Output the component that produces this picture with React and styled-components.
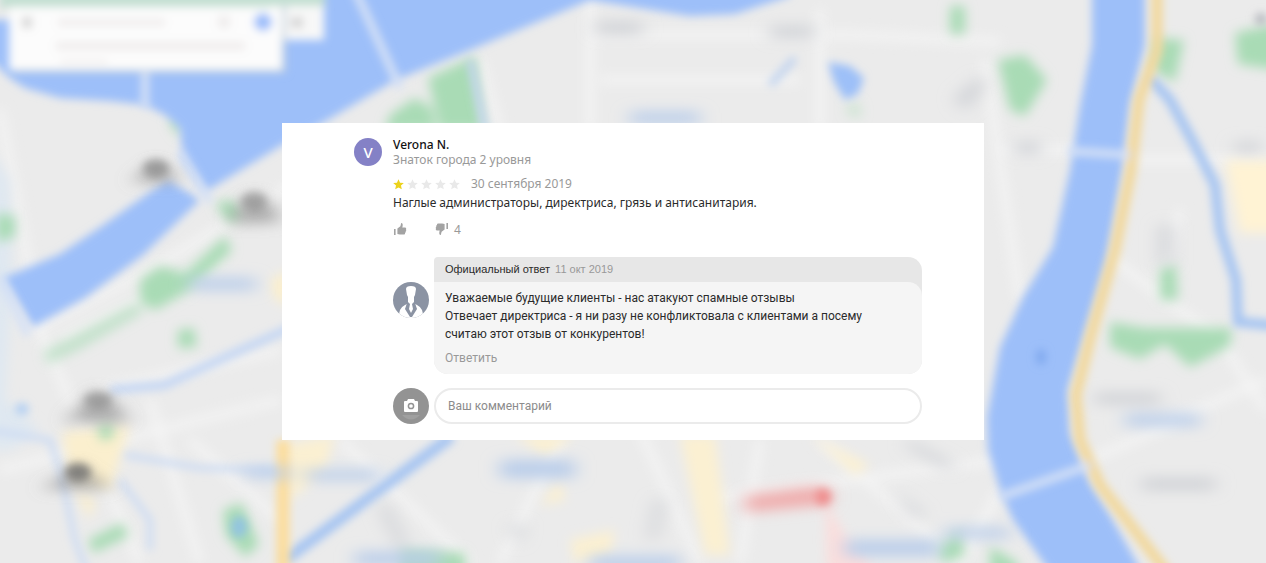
import React, { useState } from "react";
import styled, { createGlobalStyle } from "styled-components";

const review = {
  author: "Verona N.",
  level: "Знаток города 2 уровня",
  rating: 1,
  date: "30 сентября 2019",
  text: "Наглые администраторы, директриса, грязь и антисанитария.",
  likes: 0,
  dislikes: 4,
};

const reply = {
  title: "Официальный ответ",
  date: "11 окт 2019",
  lines: [
    "Уважаемые будущие клиенты - нас атакуют спамные отзывы",
    "Отвечает директриса - я ни разу не конфликтовала с клиентами а посему считаю этот отзыв от конкурентов!",
  ],
};

const App = () => {
  const [comment, setComment] = useState("");

  return (
    <Page>
      <GlobalStyle />
      <CityMap />
      <Card>
        <UserAvatar>V</UserAvatar>
        <Content>
          <Author>{review.author}</Author>
          <Level>{review.level}</Level>
          <RatingRow>
            <Rating value={review.rating} />
            <ReviewDate>{review.date}</ReviewDate>
          </RatingRow>
          <ReviewText>{review.text}</ReviewText>
          <Votes>
            <VoteButton type="button" aria-label="Нравится">
              <ThumbUp />
              {review.likes > 0 && review.likes}
            </VoteButton>
            <VoteButton type="button" aria-label="Не нравится">
              <ThumbDown />
              {review.dislikes > 0 && review.dislikes}
            </VoteButton>
          </Votes>
          <Thread>
            <OwnerAvatar />
            <Answer>
              <AnswerHeader>
                {reply.title}
                <AnswerDate>{reply.date}</AnswerDate>
              </AnswerHeader>
              <AnswerBody>
                {reply.lines.map((line) => (
                  <AnswerText key={line}>{line}</AnswerText>
                ))}
                <ReplyButton type="button">Ответить</ReplyButton>
              </AnswerBody>
            </Answer>
          </Thread>
          <CommentForm onSubmit={(e) => e.preventDefault()}>
            <CameraAvatar />
            <CommentInput
              type="text"
              aria-label="Ваш комментарий"
              placeholder="Ваш комментарий"
              value={comment}
              onChange={(e) => setComment(e.target.value)}
            />
          </CommentForm>
        </Content>
      </Card>
    </Page>
  );
};

// Sub-components
const Rating = ({ value }) => (
  <Stars role="img" aria-label={`Оценка ${value} из 5`}>
    {[1, 2, 3, 4, 5].map((n) => (
      <svg key={n} width="11" height="11" viewBox="0 0 12 12">
        <path
          d="M6 0.3 L7.7 4 L11.8 4.4 L8.7 7.2 L9.6 11.3 L6 9.2 L2.4 11.3 L3.3 7.2 L0.2 4.4 L4.3 4 Z"
          fill={n <= value ? "#ecd21c" : "#e9e9e9"}
        />
      </svg>
    ))}
  </Stars>
);

const ThumbUp = () => (
  <svg width="14" height="14" viewBox="0 0 14 14" fill="#a3a3a3">
    <path d="M1 7 H2.6 V13 H1 Z" />
    <path d="M4.4 6.6 L7.4 4.2 L8.2 1 C9.6 0.9 10 2.2 9.6 4.2 L9.3 5.4 H12 C13.3 5.4 13.5 6.7 12.9 7.2 C13.6 7.9 13.3 8.8 12.7 9.1 C13 9.9 12.7 10.7 12 11 C12.2 12 11.6 12.6 10.6 12.6 H6.8 L4.4 12 Z" />
  </svg>
);

const ThumbDown = () => (
  <svg width="14" height="14" viewBox="0 0 14 14" fill="#a3a3a3">
    <path d="M11.4 1 H13 V7 H11.4 Z" />
    <path d="M9.6 7.4 L6.6 9.8 L5.8 13 C4.4 13.1 4 11.8 4.4 9.8 L4.7 8.6 H2 C0.7 8.6 0.5 7.3 1.1 6.8 C0.4 6.1 0.7 5.2 1.3 4.9 C1 4.1 1.3 3.3 2 3 C1.8 2 2.4 1.4 3.4 1.4 H7.2 L9.6 2 Z" />
  </svg>
);

const OwnerAvatar = () => (
  <OwnerPicture viewBox="0 0 36 36" aria-hidden="true">
    <clipPath id="owner-clip">
      <circle cx="18" cy="18" r="18" />
    </clipPath>
    <g clipPath="url(#owner-clip)">
      <rect width="36" height="36" fill="#8b93a3" />
      {/* shoulders */}
      <path d="M5 36 L7 28 Q8 25 12 23 L14 22 L18 34 L22 22 L24 23 Q28 25 29 28 L31 36 Z" fill="#fff" />
      {/* jacket */}
      <path d="M14 21 H22 L24 27 L19 35 H17 L12 27 Z" fill="#8b93a3" />
      {/* head and tie */}
      <path
        d="M13 7 Q13 4 18 4 Q23 4 23 7 L22 13 L21 15 V20 L19 22 L20 27 L18 31 L16 27 L17 22 L15 20 V15 L14 13 Z"
        fill="#fff"
      />
    </g>
  </OwnerPicture>
);

const CameraAvatar = () => (
  <CameraPicture viewBox="0 0 36 36" aria-hidden="true">
    <circle cx="18" cy="18" r="18" fill="#939393" />
    <path d="M9 27 H27 Q18 36 9 27 Z" fill="#a0a0a0" />
    <path
      d="M12 13 H14 L15 11 H21 L22 13 H24 Q25 13 25 14 V23 Q25 24 24 24 H12 Q11 24 11 23 V14 Q11 13 12 13 Z"
      fill="#fff"
    />
    <circle cx="18" cy="18" r="2.6" fill="none" stroke="#939393" strokeWidth="1.5" />
  </CameraPicture>
);

const CityMap = () => (
  <MapLayer viewBox="0 0 1266 563" preserveAspectRatio="xMidYMid slice" aria-hidden="true">
    <defs>
      <filter id="soft" filterUnits="userSpaceOnUse" x="-60" y="-60" width="1386" height="683">
        <feGaussianBlur stdDeviation="4" />
      </filter>
      <filter id="hazy" filterUnits="userSpaceOnUse" x="-60" y="-60" width="1386" height="683">
        <feGaussianBlur stdDeviation="6" />
      </filter>
      <filter id="smudge" filterUnits="userSpaceOnUse" x="-60" y="-60" width="1386" height="683">
        <feGaussianBlur stdDeviation="9 7" />
      </filter>
    </defs>
    <rect x="-60" y="-60" width="1386" height="683" fill="#ebebeb" />

    {/* minor streets */}
    <g filter="url(#hazy)" fill="none" stroke="#f5f5f5" strokeWidth="7">
      <path d="M590 -10 V130 M480 60 L500 130 M590 35 H850 L1000 42 M820 10 V130 M600 80 H800" />
      <path d="M985 60 L1020 300 M1000 150 H1080 M1130 160 H1266 M1150 430 L1266 380 M1090 460 L1180 420 M1180 210 L1160 300 M1100 250 L1220 340 L1266 410" />
      <path d="M0 110 L40 330 L70 400 L140 563 M33 330 L150 270 L300 180 M60 340 L220 260 M100 390 L280 350 M0 470 L280 400 M150 400 L200 563 M190 440 L280 520" />
      <path d="M340 440 L470 563 M560 440 L500 563 M640 430 L700 563 M760 440 L740 563 M820 440 L960 563 M700 500 L1000 460 M1000 490 L960 563" />
    </g>

    {/* tinted areas */}
    <g filter="url(#hazy)">
      <path d="M1225 160 H1290 V233 H1240 Z" fill="#fff3d4" />
      <path d="M62 432 L130 425 L110 490 L70 480 Z M75 490 L95 500 L90 520 Z M270 280 L290 270 V305 L275 300 Z" fill="#fbefce" />
      <path d="M285 445 L335 435 L325 470 L290 500 Z M515 435 H575 L545 456 Z M680 435 H715 L730 555 H705 Z M570 540 L615 530 L610 555 L575 563 Z M540 505 L560 480 L565 500 Z M810 435 L870 465 L855 475 Z" fill="#fbf0d2" />
      <path d="M-10 150 L10 180 L12 280 L5 400 L40 430 L10 450 L-10 450 Z" fill="#dfe8f1" />
      <path d="M825 500 L845 535 L870 563 V590 H828 Z" fill="#fadedd" />
    </g>

    {/* parks */}
    <g filter="url(#hazy)" fill="#a9dbb5">
      <path d="M428 78 L475 56 L484 130 H440 Z M390 115 L415 98 L432 108 L436 130 H385 Z" />
      <path d="M998 60 L1025 55 L1047 80 L1025 116 L1010 110 Z M950 6 H965 V34 H950 Z M1155 38 L1184 40 L1175 82 L1152 70 Z M1235 33 L1280 23 V70 L1238 64 Z" />
      <path d="M1110 322 L1145 328 H1232 L1230 346 L1190 367 L1165 344 L1140 359 L1110 347 Z M1160 268 L1176 264 L1178 300 L1160 300 Z" />
      <path d="M168 120 L182 118 L180 138 Z M140 280 L160 266 L185 273 L225 236 L232 250 L190 290 L155 310 L140 302 Z M215 203 L232 200 L242 215 L230 224 Z M-4 213 L15 216 L15 237 L-4 242 Z" />
      <path d="M178 330 L194 328 L197 347 L178 348 Z M88 540 L122 523 L129 536 L93 553 Z M223 510 L242 503 L259 545 L245 557 L226 535 Z M98 425 L113 424 L113 438 L100 440 Z" />
      <path d="M400 550 L465 553 V590 H400 Z M935 550 L960 530 L965 555 L945 563 Z M990 546 L1018 563 V580 H990 Z" />
      <path d="M845 105 L860 102 L862 118 L848 116 Z" opacity="0.4" />
      <path d="M43 352 L70 338 L135 303 L144 312 L80 349 L48 364 Z" opacity="0.6" />
    </g>

    {/* rivers */}
    <g filter="url(#soft)">
      <path
        d="M-20 50 L10 78 L25 88 L60 98 L110 101 L145 105 L165 115 L180 128 L183 160 L205 192 L282 145 L326 121 L370 95 L396 80 L470 50 L530 25 L590 0 L640 8 L690 16 L735 14 L790 -4 L800 -50 H300 V20 H-20 Z"
        fill="#9dbff9"
      />
      <path d="M3 278 L60 254 L102 226 L150 192 L168 180 L200 200 L143 255 L85 298 L33 327 Z" fill="#9dbff9" />
      <path
        d="M1092 -50 V45 L1080 105 L1070 170 L1053 247 L1023 297 L1000 347 L987 417 L988 450 L1000 490 L1013 520 L1070 600 H1155 L1137 563 L1110 515 L1090 483 L1070 433 L1068 390 L1087 327 L1107 260 L1123 167 L1130 105 L1145 45 V-50 Z"
        fill="#9dbff9"
      />
      <path d="M828 62 L850 66 L864 78 L858 94 L845 100 L834 82 Z" fill="#9dc0f8" />
    </g>
    <g filter="url(#soft)" fill="none" stroke="#a5c4f2">
      <path d="M1150 78 L1170 100 L1192 140 L1215 185 L1220 230 L1236 280 L1238 322 L1290 327" strokeWidth="10" />
      <path d="M452 436 L285 560" strokeWidth="11" />
      <path d="M110 390 L165 385 L230 355 L290 328" strokeWidth="8" stroke="#c2d5f4" />
      <path d="M-10 430 L50 440 L60 470 L75 540 L90 580 M125 455 L200 468 L280 470 M120 480 L150 520 L150 550" strokeWidth="6" stroke="#cddcf3" />
      <path d="M470 60 L485 130 M770 85 L795 58" strokeWidth="7" stroke="#c2d4ef" />
    </g>

    {/* highways and bridges */}
    <g filter="url(#soft)" fill="none">
      <path
        d="M1157 -50 V50 L1139 100 L1131 170 L1115 250 L1091 335 L1076 395 L1080 440 L1100 485 L1165 570 L1190 610"
        stroke="#f2d89c"
        strokeWidth="11"
      />
      <path d="M283 440 V600" stroke="#fcdd9c" strokeWidth="13" />
      <path
        d="M145 65 V108 M355 -10 L400 88 M180 152 L210 202 M1068 151 L1130 155 M1000 497 L1090 465 M0 278 L28 335"
        stroke="#d5e1f6"
        strokeWidth="8"
      />
    </g>

    {/* place names and markers */}
    <g filter="url(#smudge)">
      <path
        d="M143 172 L155 162 L172 172 L180 182 H130 Z M236 208 L254 194 L272 205 L282 222 L230 224 Z M80 406 L98 390 L116 404 L130 422 H64 Z M64 476 L78 464 L92 475 L115 489 H40 Z"
        fill="#8b8b8b"
        opacity="0.65"
      />
      <g fill="#cfd1d6">
        <path d="M596 22 H642 V34 H596 Z M770 26 H814 V38 H770 Z M1015 142 H1040 V154 H1015 Z M1095 393 H1160 V404 H1095 Z M1142 478 H1215 V490 H1142 Z M1235 142 H1260 V152 H1235 Z M1160 225 H1172 V265 H1160 Z" />
        <path d="M385 500 L408 545 L400 550 L380 510 Z M655 500 H664 L656 540 H648 Z M910 440 L955 465 L948 470 L905 445 Z M510 525 H525 L518 545 Z M955 98 L980 76 L985 84 L965 112 Z M895 490 L925 515 L915 518 Z" />
      </g>
      <path
        d="M630 112 H700 V124 H630 Z M190 278 H256 V290 H190 Z M1125 414 H1200 V426 H1125 Z M500 460 H575 V478 H500 Z M305 470 H380 V480 H305 Z M355 552 H440 V566 H355 Z M845 540 H940 V556 H845 Z M945 528 H1010 V538 H945 Z M590 556 H680 V570 H590 Z M245 468 H290 V478 H245 Z"
        fill="#b9cdea"
      />
      <path d="M745 496 L812 487 L830 489 V504 L745 512 Z" fill="#f0aaaa" />
    </g>
    <g filter="url(#soft)">
      <circle cx="823" cy="497" r="8" fill="#ef8e8e" />
      <ellipse cx="1041" cy="357" rx="5" ry="8" fill="#80a9ee" />
      <ellipse cx="22" cy="409" rx="7" ry="6" fill="#b2cff3" />
      <ellipse cx="239" cy="527" rx="8" ry="11" fill="#93c4e0" />
      <circle cx="1261" cy="19" r="6" fill="#b5b7be" />
      <ellipse cx="78" cy="472" rx="13" ry="9" fill="#6f6f6f" opacity="0.8" />
      <ellipse cx="254" cy="201" rx="13" ry="9" fill="#888" opacity="0.6" />
      <ellipse cx="98" cy="400" rx="14" ry="8" fill="#888" opacity="0.6" />
      <ellipse cx="156" cy="168" rx="13" ry="9" fill="#888" opacity="0.7" />
    </g>

    {/* search panel of the map */}
    <g filter="url(#soft)">
      <path d="M0 -20 H325 V8 H0 Z" fill="#c3dfd2" />
      <rect x="270" y="6" width="54" height="34" fill="#f8f8f8" />
      <path d="M284 6 V71 H12" fill="none" stroke="#bccbd9" strokeWidth="3" />
      <rect x="9" y="7" width="273" height="63" fill="#fcfcfc" />
      <path d="M22 17 H32 V28 H22 Z M291 17 H303 V28 H291 Z" fill="#d6d6d6" />
      <path d="M58 19 H165 V26 H58 Z M56 42 H245 V50 H56 Z M60 60 H108 V64 H60 Z M218 16 H230 V28 H218 Z" fill="#efecec" />
      <circle cx="263" cy="22" r="9" fill="#9cbefa" />
    </g>
  </MapLayer>
);

// Styled Components
const GlobalStyle = createGlobalStyle`
  body {
    margin: 0;
    background: #ebebeb;
  }

  button,
  input {
    font-family: inherit;
  }
`;

const Page = styled.main`
  display: grid;
  grid-template: minmax(100vh, auto) / minmax(0, 1fr);
  align-items: center;
  justify-items: center;
  overflow: hidden;
  font-family: "Noto Sans", "Open Sans", sans-serif;
  color: #2b2b2b;
`;

// the map and the card share one grid cell
const MapLayer = styled.svg`
  grid-area: 1 / 1;
  display: block;
  width: 100%;
  height: 100%;
  min-height: 0;
  contain: size;
`;

const Card = styled.article`
  grid-area: 1 / 1;
  z-index: 1;
  box-sizing: border-box;
  display: flex;
  align-items: flex-start;
  gap: 11px;
  width: 100%;
  max-width: 702px;
  padding: 15px 62px 16px 72px;
  background: #fff;
`;

const UserAvatar = styled.div`
  flex: none;
  display: flex;
  align-items: center;
  justify-content: center;
  width: 28px;
  height: 28px;
  border-radius: 50%;
  background: #8481c6;
  color: #fff;
  font-size: 15px;
  font-weight: 500;
`;

const Content = styled.div`
  flex: 1;
  min-width: 0;
`;

const Author = styled.h2`
  margin: 0;
  font-size: 12px;
  font-weight: 500;
  line-height: 14px;
  color: #111;
`;

const Level = styled.div`
  font-size: 12px;
  line-height: 15px;
  color: #999;
`;

const RatingRow = styled.div`
  display: flex;
  align-items: center;
  gap: 11px;
  margin-top: 8px;
  line-height: 18px;
`;

const Stars = styled.span`
  display: flex;
  gap: 3px;
`;

const ReviewDate = styled.time`
  font-size: 12px;
  color: #999;
`;

const ReviewText = styled.p`
  margin: 0;
  font-size: 12px;
  line-height: 20px;
`;

const Votes = styled.div`
  display: flex;
  gap: 28px;
  margin-top: 8px;
`;

const VoteButton = styled.button`
  display: flex;
  align-items: center;
  gap: 5px;
  height: 16px;
  padding: 0;
  border: none;
  background: none;
  color: #999;
  font-size: 12px;
  cursor: pointer;
`;

const Thread = styled.div`
  display: flex;
  align-items: flex-start;
  gap: 5px;
  margin-top: 20px;
  font-family: Roboto, "Liberation Sans", sans-serif;
`;

const OwnerPicture = styled.svg`
  flex: none;
  width: 36px;
  height: 36px;
  margin-top: 25px;
`;

const Answer = styled.section`
  flex: 1;
  min-width: 0;
  border-radius: 4px 14px 14px 14px;
  background: #e7e7e7;
`;

const AnswerHeader = styled.header`
  padding: 0 11px;
  font-family: "Liberation Sans", Arial, sans-serif;
  font-size: 11px;
  line-height: 25px;
`;

const AnswerDate = styled.time`
  margin-left: 5px;
  color: #999;
`;

const AnswerBody = styled.div`
  padding: 7px 36px 7px 11px;
  border-radius: 0 14px 14px 14px;
  background: #f5f5f5;
`;

const AnswerText = styled.p`
  margin: 0;
  font-size: 12px;
  line-height: 18px;
`;

const ReplyButton = styled.button`
  display: block;
  margin-top: 7px;
  padding: 0;
  border: none;
  background: none;
  color: #999;
  font-size: 12px;
  line-height: 17px;
  cursor: pointer;
`;

const CommentForm = styled.form`
  display: flex;
  align-items: center;
  gap: 5px;
  margin-top: 14px;
  font-family: Roboto, "Liberation Sans", sans-serif;
`;

const CameraPicture = styled.svg`
  flex: none;
  width: 36px;
  height: 36px;
`;

const CommentInput = styled.input`
  flex: 1;
  box-sizing: border-box;
  min-width: 0;
  height: 36px;
  padding: 0 12px;
  border: 2px solid #ebebeb;
  border-radius: 18px;
  background: #fff;
  color: #2b2b2b;
  font-size: 12px;

  &::placeholder {
    color: #8c8c8c;
    opacity: 1;
  }
`;

export default App;
